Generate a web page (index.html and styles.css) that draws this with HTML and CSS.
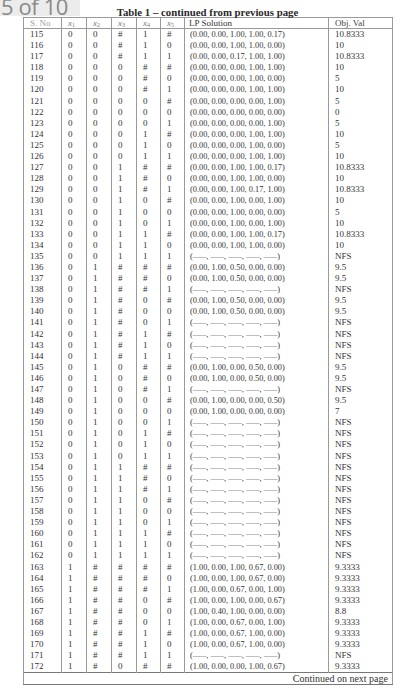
FILE: index.html
```html
<!DOCTYPE html>
<html>
<head>
<meta charset="utf-8">
<link rel="stylesheet" href="styles.css">
</head>
<body>
<div class="page">
  <div class="caption">Table 1 – continued from previous page</div>
  <table class="tbl">
    <colgroup>
      <col class="c-no"><col class="c-x"><col class="c-x"><col class="c-x"><col class="c-x4"><col class="c-x4"><col class="c-lp"><col class="c-obj">
    </colgroup>
    <thead>
      <tr>
        <th class="sno">S. No</th>
        <th><i>x</i><sub>1</sub></th>
        <th><i>x</i><sub>2</sub></th>
        <th><i>x</i><sub>3</sub></th>
        <th><i>x</i><sub>4</sub></th>
        <th><i>x</i><sub>5</sub></th>
        <th class="lph">LP Solution</th>
        <th class="objh">Obj. Val</th>
      </tr>
    </thead>
    <tbody>
      <tr><td>115</td><td>0</td><td>0</td><td>#</td><td>1</td><td>#</td><td class="lp">(0.00, 0.00, 1.00, 1.00, 0.17)</td><td>10.8333</td></tr>
      <tr><td>116</td><td>0</td><td>0</td><td>#</td><td>1</td><td>0</td><td class="lp">(0.00, 0.00, 1.00, 1.00, 0.00)</td><td>10</td></tr>
      <tr><td>117</td><td>0</td><td>0</td><td>#</td><td>1</td><td>1</td><td class="lp">(0.00, 0.00, 0.17, 1.00, 1.00)</td><td>10.8333</td></tr>
      <tr><td>118</td><td>0</td><td>0</td><td>0</td><td>#</td><td>#</td><td class="lp">(0.00, 0.00, 0.00, 1.00, 1.00)</td><td>10</td></tr>
      <tr><td>119</td><td>0</td><td>0</td><td>0</td><td>#</td><td>0</td><td class="lp">(0.00, 0.00, 0.00, 1.00, 0.00)</td><td>5</td></tr>
      <tr><td>120</td><td>0</td><td>0</td><td>0</td><td>#</td><td>1</td><td class="lp">(0.00, 0.00, 0.00, 1.00, 1.00)</td><td>10</td></tr>
      <tr><td>121</td><td>0</td><td>0</td><td>0</td><td>0</td><td>#</td><td class="lp">(0.00, 0.00, 0.00, 0.00, 1.00)</td><td>5</td></tr>
      <tr><td>122</td><td>0</td><td>0</td><td>0</td><td>0</td><td>0</td><td class="lp">(0.00, 0.00, 0.00, 0.00, 0.00)</td><td>0</td></tr>
      <tr><td>123</td><td>0</td><td>0</td><td>0</td><td>0</td><td>1</td><td class="lp">(0.00, 0.00, 0.00, 0.00, 1.00)</td><td>5</td></tr>
      <tr><td>124</td><td>0</td><td>0</td><td>0</td><td>1</td><td>#</td><td class="lp">(0.00, 0.00, 0.00, 1.00, 1.00)</td><td>10</td></tr>
      <tr><td>125</td><td>0</td><td>0</td><td>0</td><td>1</td><td>0</td><td class="lp">(0.00, 0.00, 0.00, 1.00, 0.00)</td><td>5</td></tr>
      <tr><td>126</td><td>0</td><td>0</td><td>0</td><td>1</td><td>1</td><td class="lp">(0.00, 0.00, 0.00, 1.00, 1.00)</td><td>10</td></tr>
      <tr><td>127</td><td>0</td><td>0</td><td>1</td><td>#</td><td>#</td><td class="lp">(0.00, 0.00, 1.00, 1.00, 0.17)</td><td>10.8333</td></tr>
      <tr><td>128</td><td>0</td><td>0</td><td>1</td><td>#</td><td>0</td><td class="lp">(0.00, 0.00, 1.00, 1.00, 0.00)</td><td>10</td></tr>
      <tr><td>129</td><td>0</td><td>0</td><td>1</td><td>#</td><td>1</td><td class="lp">(0.00, 0.00, 1.00, 0.17, 1.00)</td><td>10.8333</td></tr>
      <tr><td>130</td><td>0</td><td>0</td><td>1</td><td>0</td><td>#</td><td class="lp">(0.00, 0.00, 1.00, 0.00, 1.00)</td><td>10</td></tr>
      <tr><td>131</td><td>0</td><td>0</td><td>1</td><td>0</td><td>0</td><td class="lp">(0.00, 0.00, 1.00, 0.00, 0.00)</td><td>5</td></tr>
      <tr><td>132</td><td>0</td><td>0</td><td>1</td><td>0</td><td>1</td><td class="lp">(0.00, 0.00, 1.00, 0.00, 1.00)</td><td>10</td></tr>
      <tr><td>133</td><td>0</td><td>0</td><td>1</td><td>1</td><td>#</td><td class="lp">(0.00, 0.00, 1.00, 1.00, 0.17)</td><td>10.8333</td></tr>
      <tr><td>134</td><td>0</td><td>0</td><td>1</td><td>1</td><td>0</td><td class="lp">(0.00, 0.00, 1.00, 1.00, 0.00)</td><td>10</td></tr>
      <tr><td>135</td><td>0</td><td>0</td><td>1</td><td>1</td><td>1</td><td class="lp">(<span class="d">——</span>, <span class="d">——</span>, <span class="d">——</span>, <span class="d">——</span>, <span class="d">——</span>)</td><td>NFS</td></tr>
      <tr><td>136</td><td>0</td><td>1</td><td>#</td><td>#</td><td>#</td><td class="lp">(0.00, 1.00, 0.50, 0.00, 0.00)</td><td>9.5</td></tr>
      <tr><td>137</td><td>0</td><td>1</td><td>#</td><td>#</td><td>0</td><td class="lp">(0.00, 1.00, 0.50, 0.00, 0.00)</td><td>9.5</td></tr>
      <tr><td>138</td><td>0</td><td>1</td><td>#</td><td>#</td><td>1</td><td class="lp">(<span class="d">——</span>, <span class="d">——</span>, <span class="d">——</span>, <span class="d">——</span>, <span class="d">——</span>)</td><td>NFS</td></tr>
      <tr><td>139</td><td>0</td><td>1</td><td>#</td><td>0</td><td>#</td><td class="lp">(0.00, 1.00, 0.50, 0.00, 0.00)</td><td>9.5</td></tr>
      <tr><td>140</td><td>0</td><td>1</td><td>#</td><td>0</td><td>0</td><td class="lp">(0.00, 1.00, 0.50, 0.00, 0.00)</td><td>9.5</td></tr>
      <tr><td>141</td><td>0</td><td>1</td><td>#</td><td>0</td><td>1</td><td class="lp">(<span class="d">——</span>, <span class="d">——</span>, <span class="d">——</span>, <span class="d">——</span>, <span class="d">——</span>)</td><td>NFS</td></tr>
      <tr><td>142</td><td>0</td><td>1</td><td>#</td><td>1</td><td>#</td><td class="lp">(<span class="d">——</span>, <span class="d">——</span>, <span class="d">——</span>, <span class="d">——</span>, <span class="d">——</span>)</td><td>NFS</td></tr>
      <tr><td>143</td><td>0</td><td>1</td><td>#</td><td>1</td><td>0</td><td class="lp">(<span class="d">——</span>, <span class="d">——</span>, <span class="d">——</span>, <span class="d">——</span>, <span class="d">——</span>)</td><td>NFS</td></tr>
      <tr><td>144</td><td>0</td><td>1</td><td>#</td><td>1</td><td>1</td><td class="lp">(<span class="d">——</span>, <span class="d">——</span>, <span class="d">——</span>, <span class="d">——</span>, <span class="d">——</span>)</td><td>NFS</td></tr>
      <tr><td>145</td><td>0</td><td>1</td><td>0</td><td>#</td><td>#</td><td class="lp">(0.00, 1.00, 0.00, 0.50, 0.00)</td><td>9.5</td></tr>
      <tr><td>146</td><td>0</td><td>1</td><td>0</td><td>#</td><td>0</td><td class="lp">(0.00, 1.00, 0.00, 0.50, 0.00)</td><td>9.5</td></tr>
      <tr><td>147</td><td>0</td><td>1</td><td>0</td><td>#</td><td>1</td><td class="lp">(<span class="d">——</span>, <span class="d">——</span>, <span class="d">——</span>, <span class="d">——</span>, <span class="d">——</span>)</td><td>NFS</td></tr>
      <tr><td>148</td><td>0</td><td>1</td><td>0</td><td>0</td><td>#</td><td class="lp">(0.00, 1.00, 0.00, 0.00, 0.50)</td><td>9.5</td></tr>
      <tr><td>149</td><td>0</td><td>1</td><td>0</td><td>0</td><td>0</td><td class="lp">(0.00, 1.00, 0.00, 0.00, 0.00)</td><td>7</td></tr>
      <tr><td>150</td><td>0</td><td>1</td><td>0</td><td>0</td><td>1</td><td class="lp">(<span class="d">——</span>, <span class="d">——</span>, <span class="d">——</span>, <span class="d">——</span>, <span class="d">——</span>)</td><td>NFS</td></tr>
      <tr><td>151</td><td>0</td><td>1</td><td>0</td><td>1</td><td>#</td><td class="lp">(<span class="d">——</span>, <span class="d">——</span>, <span class="d">——</span>, <span class="d">——</span>, <span class="d">——</span>)</td><td>NFS</td></tr>
      <tr><td>152</td><td>0</td><td>1</td><td>0</td><td>1</td><td>0</td><td class="lp">(<span class="d">——</span>, <span class="d">——</span>, <span class="d">——</span>, <span class="d">——</span>, <span class="d">——</span>)</td><td>NFS</td></tr>
      <tr><td>153</td><td>0</td><td>1</td><td>0</td><td>1</td><td>1</td><td class="lp">(<span class="d">——</span>, <span class="d">——</span>, <span class="d">——</span>, <span class="d">——</span>, <span class="d">——</span>)</td><td>NFS</td></tr>
      <tr><td>154</td><td>0</td><td>1</td><td>1</td><td>#</td><td>#</td><td class="lp">(<span class="d">——</span>, <span class="d">——</span>, <span class="d">——</span>, <span class="d">——</span>, <span class="d">——</span>)</td><td>NFS</td></tr>
      <tr><td>155</td><td>0</td><td>1</td><td>1</td><td>#</td><td>0</td><td class="lp">(<span class="d">——</span>, <span class="d">——</span>, <span class="d">——</span>, <span class="d">——</span>, <span class="d">——</span>)</td><td>NFS</td></tr>
      <tr><td>156</td><td>0</td><td>1</td><td>1</td><td>#</td><td>1</td><td class="lp">(<span class="d">——</span>, <span class="d">——</span>, <span class="d">——</span>, <span class="d">——</span>, <span class="d">——</span>)</td><td>NFS</td></tr>
      <tr><td>157</td><td>0</td><td>1</td><td>1</td><td>0</td><td>#</td><td class="lp">(<span class="d">——</span>, <span class="d">——</span>, <span class="d">——</span>, <span class="d">——</span>, <span class="d">——</span>)</td><td>NFS</td></tr>
      <tr><td>158</td><td>0</td><td>1</td><td>1</td><td>0</td><td>0</td><td class="lp">(<span class="d">——</span>, <span class="d">——</span>, <span class="d">——</span>, <span class="d">——</span>, <span class="d">——</span>)</td><td>NFS</td></tr>
      <tr><td>159</td><td>0</td><td>1</td><td>1</td><td>0</td><td>1</td><td class="lp">(<span class="d">——</span>, <span class="d">——</span>, <span class="d">——</span>, <span class="d">——</span>, <span class="d">——</span>)</td><td>NFS</td></tr>
      <tr><td>160</td><td>0</td><td>1</td><td>1</td><td>1</td><td>#</td><td class="lp">(<span class="d">——</span>, <span class="d">——</span>, <span class="d">——</span>, <span class="d">——</span>, <span class="d">——</span>)</td><td>NFS</td></tr>
      <tr><td>161</td><td>0</td><td>1</td><td>1</td><td>1</td><td>0</td><td class="lp">(<span class="d">——</span>, <span class="d">——</span>, <span class="d">——</span>, <span class="d">——</span>, <span class="d">——</span>)</td><td>NFS</td></tr>
      <tr><td>162</td><td>0</td><td>1</td><td>1</td><td>1</td><td>1</td><td class="lp">(<span class="d">——</span>, <span class="d">——</span>, <span class="d">——</span>, <span class="d">——</span>, <span class="d">——</span>)</td><td>NFS</td></tr>
      <tr><td>163</td><td>1</td><td>#</td><td>#</td><td>#</td><td>#</td><td class="lp">(1.00, 0.00, 1.00, 0.67, 0.00)</td><td>9.3333</td></tr>
      <tr><td>164</td><td>1</td><td>#</td><td>#</td><td>#</td><td>0</td><td class="lp">(1.00, 0.00, 1.00, 0.67, 0.00)</td><td>9.3333</td></tr>
      <tr><td>165</td><td>1</td><td>#</td><td>#</td><td>#</td><td>1</td><td class="lp">(1.00, 0.00, 0.67, 0.00, 1.00)</td><td>9.3333</td></tr>
      <tr><td>166</td><td>1</td><td>#</td><td>#</td><td>0</td><td>#</td><td class="lp">(1.00, 0.00, 1.00, 0.00, 0.67)</td><td>9.3333</td></tr>
      <tr><td>167</td><td>1</td><td>#</td><td>#</td><td>0</td><td>0</td><td class="lp">(1.00, 0.40, 1.00, 0.00, 0.00)</td><td>8.8</td></tr>
      <tr><td>168</td><td>1</td><td>#</td><td>#</td><td>0</td><td>1</td><td class="lp">(1.00, 0.00, 0.67, 0.00, 1.00)</td><td>9.3333</td></tr>
      <tr><td>169</td><td>1</td><td>#</td><td>#</td><td>1</td><td>#</td><td class="lp">(1.00, 0.00, 0.67, 1.00, 0.00)</td><td>9.3333</td></tr>
      <tr><td>170</td><td>1</td><td>#</td><td>#</td><td>1</td><td>0</td><td class="lp">(1.00, 0.00, 0.67, 1.00, 0.00)</td><td>9.3333</td></tr>
      <tr><td>171</td><td>1</td><td>#</td><td>#</td><td>1</td><td>1</td><td class="lp">(<span class="d">——</span>, <span class="d">——</span>, <span class="d">——</span>, <span class="d">——</span>, <span class="d">——</span>)</td><td>NFS</td></tr>
      <tr><td>172</td><td>1</td><td>#</td><td>0</td><td>#</td><td>#</td><td class="lp">(1.00, 0.00, 0.00, 1.00, 0.67)</td><td>9.3333</td></tr>
    </tbody>
    <tfoot>
      <tr><td colspan="8" class="cont">Continued on next page</td></tr>
    </tfoot>
  </table>
  <div class="pager">5 of 10</div>
</div>
</body>
</html>
```

FILE: styles.css
```css
html, body {
  margin: 0;
  padding: 0;
  background: #ffffff;
}
.page {
  position: relative;
  width: 406px;
  height: 700px;
  overflow: hidden;
  padding-left: 23px;
  box-sizing: border-box;
  font-family: "Liberation Serif", "DejaVu Serif", serif;
  color: #333333;
}
.caption {
  width: 369px;
  text-align: center;
  font-weight: bold;
  font-size: 10.8px;
  line-height: 10px;
  padding-top: 7px;
  height: 10px;
  color: #2a2a2a;
}
.tbl {
  width: 369px;
  border-collapse: collapse;
  table-layout: fixed;
  font-size: 9px;
}
.c-no { width: 38px; }
.c-x { width: 25px; }
.c-x4 { width: 24px; }
.c-lp { width: 144px; }
.c-obj { width: 64px; }
.tbl th, .tbl td {
  border-left: 1px solid #9a9a9a;
  border-right: 1px solid #9a9a9a;
  padding: 0 0 0 6px;
  text-align: left;
  white-space: nowrap;
  overflow: hidden;
  vertical-align: middle;
}
.tbl thead tr {
  height: 11px;
}
.tbl th {
  font-weight: normal;
  line-height: 10px;
  border-top: 1px solid #9a9a9a;
  border-bottom: 1px solid #9a9a9a;
  color: #777777;
}
.tbl th.sno {
  color: #a0a0a0;
}
.tbl th sub {
  font-size: 6px;
  line-height: 0;
  vertical-align: -1px;
}
.tbl th.lph {
  padding-left: 4px;
  color: #333333;
}
.tbl th.objh {
  color: #444444;
}
.tbl tbody tr {
  height: 11.1px;
}
.tbl tbody td {
  line-height: 11.1px;
}
.tbl td.lp {
  font-size: 8.3px;
  padding-left: 5px;
}
.d {
  font-size: 6.8px;
}
.tbl tfoot tr {
  height: 12px;
}
.tbl td.cont {
  border-top: 1px solid #777777;
  border-bottom: 1px solid #777777;
  text-align: right;
  font-size: 10px;
  line-height: 11px;
  padding-right: 4px;
}
.pager {
  position: absolute;
  top: 0;
  left: 0;
  width: 80px;
  height: 16px;
  overflow: hidden;
  background: #ececec;
  font-family: "Open Sans", "DejaVu Sans", sans-serif;
  font-size: 22px;
  line-height: 13px;
  letter-spacing: -0.4px;
  color: #8a8a8a;
  padding-left: 1px;
  box-sizing: border-box;
}
```
